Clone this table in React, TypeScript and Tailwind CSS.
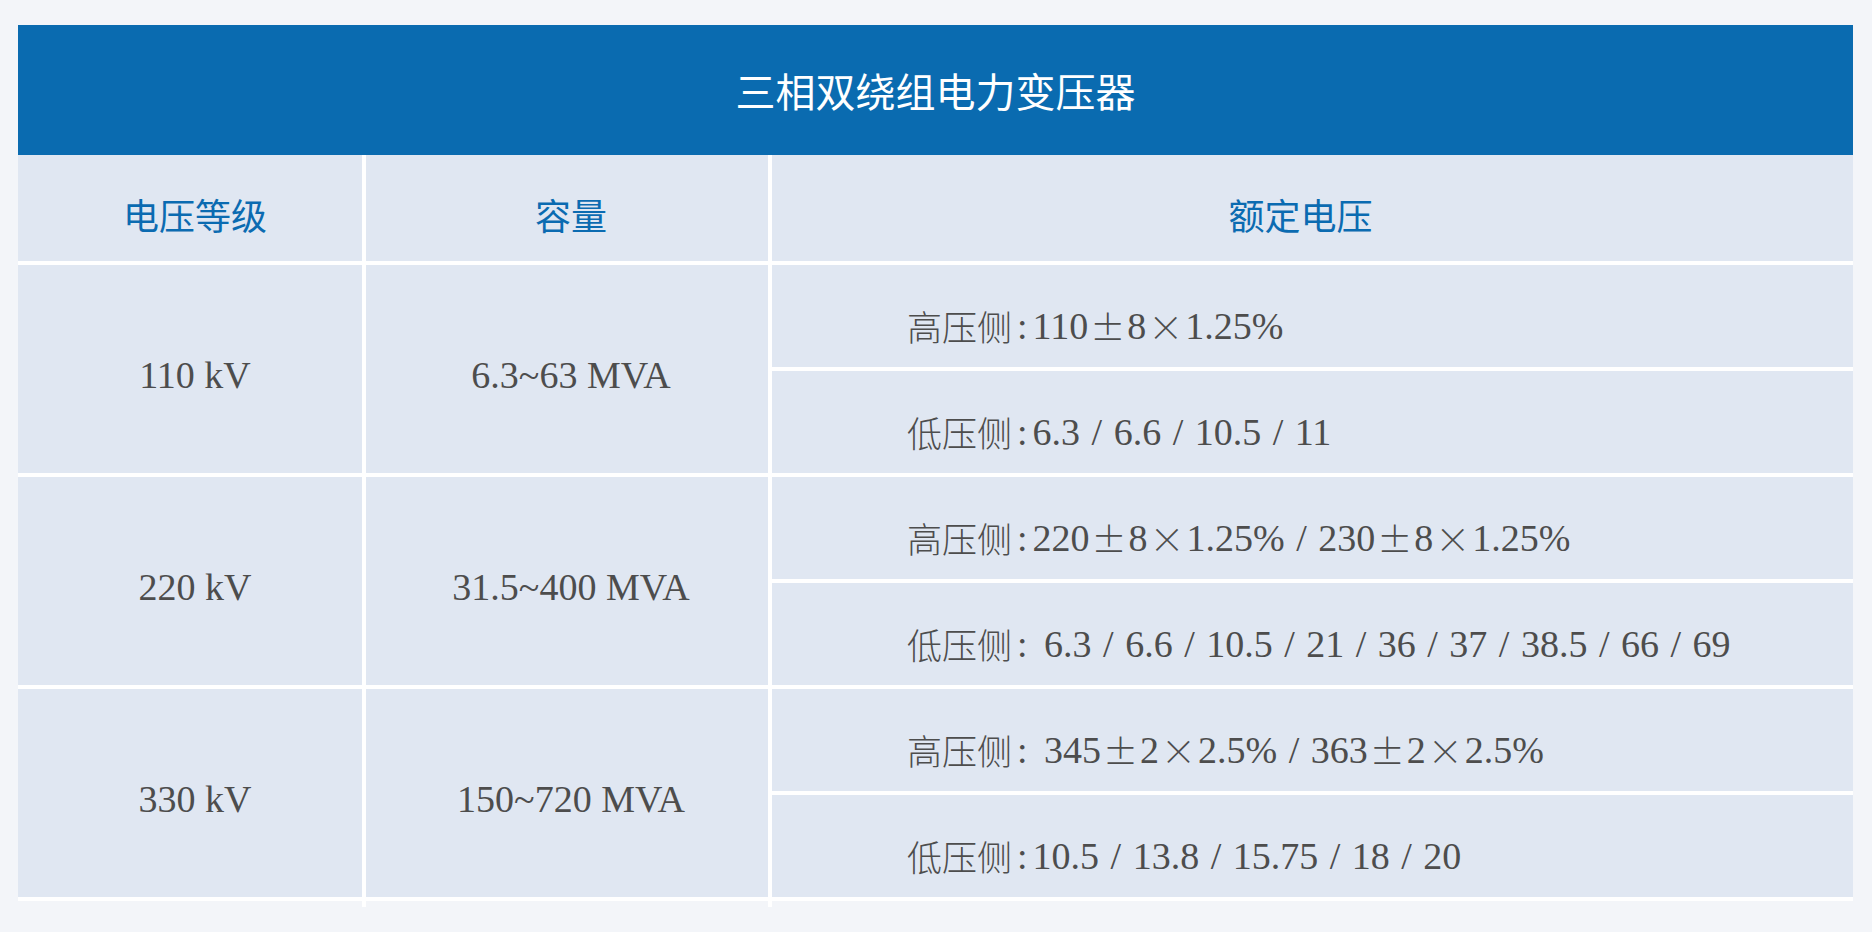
import React from "react";

type Mode = "lat" | "cjk" | "colon";

function Rich({ text }: { text: string }) {
  const parts: { mode: Mode; s: string }[] = [];
  for (const ch of text) {
    const m: Mode = ch === ":" ? "colon" : /[\u4e00-\u9fff±×]/.test(ch) ? "cjk" : "lat";
    const last = parts[parts.length - 1];
    if (last && last.mode === m && m !== "cjk") last.s += ch;
    else if (last && last.mode === m && /[\u4e00-\u9fff]/.test(ch) && /[\u4e00-\u9fff]$/.test(last.s)) last.s += ch;
    else parts.push({ mode: m, s: ch });
  }
  return (
    <>
      {parts.map((p, i) =>
        p.mode === "cjk" ? (
          /[±×]/.test(p.s) ? (
            <span key={i} className="font-['Noto_Sans_CJK_SC',sans-serif] text-[35px] font-light mx-[2px]">
              {p.s}
            </span>
          ) : (
            <span key={i} className="font-['Noto_Sans_CJK_SC',sans-serif] text-[35px] font-light">
              {p.s}
            </span>
          )
        ) : p.mode === "colon" ? (
          <span key={i} className="mx-[5px]">
            {p.s}
          </span>
        ) : (
          <span key={i}>{p.s}</span>
        )
      )}
    </>
  );
}

const rows = [
  {
    level: "110 kV",
    cap: "6.3~63 MVA",
    hi: "高压侧:110±8×1.25%",
    lo: "低压侧:6.3 / 6.6 / 10.5 / 11",
  },
  {
    level: "220 kV",
    cap: "31.5~400 MVA",
    hi: "高压侧:220±8×1.25% / 230±8×1.25%",
    lo: "低压侧: 6.3 / 6.6 / 10.5 / 21 / 36 / 37 / 38.5 / 66 / 69",
  },
  {
    level: "330 kV",
    cap: "150~720 MVA",
    hi: "高压侧: 345±2×2.5% / 363±2×2.5%",
    lo: "低压侧:10.5 / 13.8 / 15.75 / 18 / 20",
  },
];

export default function App() {
  return (
    <div className="min-h-screen bg-[#f3f5f9] pt-[25px] pl-[18px]">
      <div className="w-[1835px]">
        <div className="h-[130px] bg-[#0a6bb0] flex items-center justify-center">
          <span className="font-['Noto_Sans_CJK_SC',sans-serif] text-[40px] text-white leading-none">
            三相双绕组电力变压器
          </span>
        </div>
        <div className="grid grid-cols-[344px_402px_1081px] grid-rows-[106px_repeat(6,102px)] gap-[4px] bg-white pb-[4px] font-['Liberation_Serif','Noto_Sans_CJK_SC',serif] text-[38px] text-[#4d4d4d] leading-[42px] [word-spacing:2px]">
          <div className="bg-[#e0e7f2] flex items-center justify-center pt-3 pl-[10px] font-['Noto_Sans_CJK_SC',sans-serif] text-[36px] text-[#0b6bb1]">
            电压等级
          </div>
          <div className="bg-[#e0e7f2] flex items-center justify-center pt-3 pl-[8px] font-['Noto_Sans_CJK_SC',sans-serif] text-[36px] text-[#0b6bb1]">
            容量
          </div>
          <div className="bg-[#e0e7f2] flex items-center justify-center pt-3 pr-[24px] font-['Noto_Sans_CJK_SC',sans-serif] text-[36px] text-[#0b6bb1]">
            额定电压
          </div>
          {rows.map((r) => (
            <React.Fragment key={r.level}>
              <div className="row-span-2 bg-[#e0e7f2] flex items-center justify-center pt-3 pl-[10px] [word-spacing:0px]">
                {r.level}
              </div>
              <div className="row-span-2 bg-[#e0e7f2] flex items-center justify-center pt-3 pl-[8px] [word-spacing:0px]">
                {r.cap}
              </div>
              <div className="bg-[#e0e7f2] flex items-center pl-[135px] pt-5 whitespace-pre">
                <Rich text={r.hi} />
              </div>
              <div className="bg-[#e0e7f2] flex items-center pl-[135px] pt-5 whitespace-pre">
                <Rich text={r.lo} />
              </div>
            </React.Fragment>
          ))}
        </div>
        <div className="flex h-[6px]">
          <div className="w-[344px]" />
          <div className="w-[4px] bg-white" />
          <div className="w-[402px]" />
          <div className="w-[4px] bg-white" />
        </div>
      </div>
    </div>
  );
}
